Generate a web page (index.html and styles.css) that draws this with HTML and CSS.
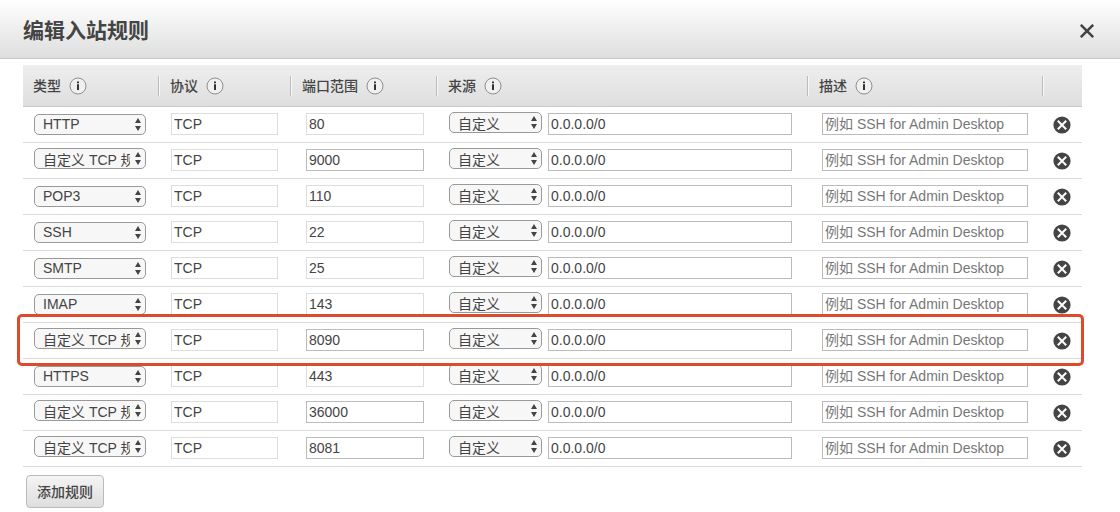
FILE: index.html
```html
<!DOCTYPE html>
<html lang="zh-CN">
<head>
<meta charset="utf-8">
<title>编辑入站规则</title>
<link rel="stylesheet" href="styles.css">
</head>
<body>
<svg class="sprite" aria-hidden="true">
  <symbol id="info" viewBox="0 0 18 18"><circle cx="9" cy="9" r="8" fill="#f0f0f0" stroke="#8f8f8f"/><path d="M8 4.5h2v1.7H8zM8 7.2h2V13H8z" fill="#333"/></symbol>
  <symbol id="remove" viewBox="0 0 18 18"><circle cx="9" cy="9" r="8.6" fill="#444"/><path d="M4.8 4.8l8.4 8.4M13.2 4.8l-8.4 8.4" stroke="#fff" stroke-width="2"/></symbol>
</svg>
<header class="titlebar">
  <h1 class="title">编辑入站规则</h1>
  <button class="icon-button" type="button" aria-label="关闭"><svg class="close-icon" viewBox="0 0 14 14"><path d="M0.8 0.8l12.4 12.4M13.2 0.8L0.8 13.2" stroke="#444" stroke-width="2.5"/></svg></button>
</header>
<main class="content">
  <table class="rules">
    <colgroup><col class="col-type"><col class="col-protocol"><col class="col-port"><col class="col-source"><col class="col-desc"><col class="col-remove"></colgroup>
    <thead>
      <tr>
        <th><div class="head">类型<svg class="icon"><use href="#info"/></svg></div></th>
        <th><div class="head">协议<svg class="icon"><use href="#info"/></svg></div></th>
        <th><div class="head">端口范围<svg class="icon"><use href="#info"/></svg></div></th>
        <th><div class="head">来源<svg class="icon"><use href="#info"/></svg></div></th>
        <th><div class="head">描述<svg class="icon"><use href="#info"/></svg></div></th>
        <th><div class="head"></div></th>
      </tr>
    </thead>
    <tbody>
      <tr>
        <td class="type preset"><div class="picker"><select aria-label="类型"><option>HTTP</option></select></div></td>
        <td class="protocol"><input class="field" aria-label="协议" value="TCP" disabled></td>
        <td class="port"><input class="field" aria-label="端口范围" value="80" disabled></td>
        <td class="source"><div class="source-fields"><div class="picker"><select aria-label="来源"><option>自定义</option></select></div><input class="field" aria-label="来源地址" value="0.0.0.0/0"></div></td>
        <td class="desc"><input class="field" aria-label="描述" placeholder="例如 SSH for Admin Desktop"></td>
        <td class="remove"><button class="icon-button" type="button" aria-label="删除"><svg class="icon"><use href="#remove"/></svg></button></td>
      </tr>
      <tr>
        <td class="type"><div class="picker"><select aria-label="类型"><option>自定义 TCP 规则</option></select></div></td>
        <td class="protocol"><input class="field" aria-label="协议" value="TCP" disabled></td>
        <td class="port"><input class="field" aria-label="端口范围" value="9000"></td>
        <td class="source"><div class="source-fields"><div class="picker"><select aria-label="来源"><option>自定义</option></select></div><input class="field" aria-label="来源地址" value="0.0.0.0/0"></div></td>
        <td class="desc"><input class="field" aria-label="描述" placeholder="例如 SSH for Admin Desktop"></td>
        <td class="remove"><button class="icon-button" type="button" aria-label="删除"><svg class="icon"><use href="#remove"/></svg></button></td>
      </tr>
      <tr>
        <td class="type preset"><div class="picker"><select aria-label="类型"><option>POP3</option></select></div></td>
        <td class="protocol"><input class="field" aria-label="协议" value="TCP" disabled></td>
        <td class="port"><input class="field" aria-label="端口范围" value="110" disabled></td>
        <td class="source"><div class="source-fields"><div class="picker"><select aria-label="来源"><option>自定义</option></select></div><input class="field" aria-label="来源地址" value="0.0.0.0/0"></div></td>
        <td class="desc"><input class="field" aria-label="描述" placeholder="例如 SSH for Admin Desktop"></td>
        <td class="remove"><button class="icon-button" type="button" aria-label="删除"><svg class="icon"><use href="#remove"/></svg></button></td>
      </tr>
      <tr>
        <td class="type preset"><div class="picker"><select aria-label="类型"><option>SSH</option></select></div></td>
        <td class="protocol"><input class="field" aria-label="协议" value="TCP" disabled></td>
        <td class="port"><input class="field" aria-label="端口范围" value="22" disabled></td>
        <td class="source"><div class="source-fields"><div class="picker"><select aria-label="来源"><option>自定义</option></select></div><input class="field" aria-label="来源地址" value="0.0.0.0/0"></div></td>
        <td class="desc"><input class="field" aria-label="描述" placeholder="例如 SSH for Admin Desktop"></td>
        <td class="remove"><button class="icon-button" type="button" aria-label="删除"><svg class="icon"><use href="#remove"/></svg></button></td>
      </tr>
      <tr>
        <td class="type preset"><div class="picker"><select aria-label="类型"><option>SMTP</option></select></div></td>
        <td class="protocol"><input class="field" aria-label="协议" value="TCP" disabled></td>
        <td class="port"><input class="field" aria-label="端口范围" value="25" disabled></td>
        <td class="source"><div class="source-fields"><div class="picker"><select aria-label="来源"><option>自定义</option></select></div><input class="field" aria-label="来源地址" value="0.0.0.0/0"></div></td>
        <td class="desc"><input class="field" aria-label="描述" placeholder="例如 SSH for Admin Desktop"></td>
        <td class="remove"><button class="icon-button" type="button" aria-label="删除"><svg class="icon"><use href="#remove"/></svg></button></td>
      </tr>
      <tr>
        <td class="type preset"><div class="picker"><select aria-label="类型"><option>IMAP</option></select></div></td>
        <td class="protocol"><input class="field" aria-label="协议" value="TCP" disabled></td>
        <td class="port"><input class="field" aria-label="端口范围" value="143" disabled></td>
        <td class="source"><div class="source-fields"><div class="picker"><select aria-label="来源"><option>自定义</option></select></div><input class="field" aria-label="来源地址" value="0.0.0.0/0"></div></td>
        <td class="desc"><input class="field" aria-label="描述" placeholder="例如 SSH for Admin Desktop"></td>
        <td class="remove"><button class="icon-button" type="button" aria-label="删除"><svg class="icon"><use href="#remove"/></svg></button></td>
      </tr>
      <tr class="highlighted">
        <td class="type"><div class="picker"><select aria-label="类型"><option>自定义 TCP 规则</option></select></div></td>
        <td class="protocol"><input class="field" aria-label="协议" value="TCP" disabled></td>
        <td class="port"><input class="field" aria-label="端口范围" value="8090"></td>
        <td class="source"><div class="source-fields"><div class="picker"><select aria-label="来源"><option>自定义</option></select></div><input class="field" aria-label="来源地址" value="0.0.0.0/0"></div></td>
        <td class="desc"><input class="field" aria-label="描述" placeholder="例如 SSH for Admin Desktop"></td>
        <td class="remove"><button class="icon-button" type="button" aria-label="删除"><svg class="icon"><use href="#remove"/></svg></button></td>
      </tr>
      <tr>
        <td class="type preset"><div class="picker"><select aria-label="类型"><option>HTTPS</option></select></div></td>
        <td class="protocol"><input class="field" aria-label="协议" value="TCP" disabled></td>
        <td class="port"><input class="field" aria-label="端口范围" value="443" disabled></td>
        <td class="source"><div class="source-fields"><div class="picker"><select aria-label="来源"><option>自定义</option></select></div><input class="field" aria-label="来源地址" value="0.0.0.0/0"></div></td>
        <td class="desc"><input class="field" aria-label="描述" placeholder="例如 SSH for Admin Desktop"></td>
        <td class="remove"><button class="icon-button" type="button" aria-label="删除"><svg class="icon"><use href="#remove"/></svg></button></td>
      </tr>
      <tr>
        <td class="type"><div class="picker"><select aria-label="类型"><option>自定义 TCP 规则</option></select></div></td>
        <td class="protocol"><input class="field" aria-label="协议" value="TCP" disabled></td>
        <td class="port"><input class="field" aria-label="端口范围" value="36000"></td>
        <td class="source"><div class="source-fields"><div class="picker"><select aria-label="来源"><option>自定义</option></select></div><input class="field" aria-label="来源地址" value="0.0.0.0/0"></div></td>
        <td class="desc"><input class="field" aria-label="描述" placeholder="例如 SSH for Admin Desktop"></td>
        <td class="remove"><button class="icon-button" type="button" aria-label="删除"><svg class="icon"><use href="#remove"/></svg></button></td>
      </tr>
      <tr>
        <td class="type"><div class="picker"><select aria-label="类型"><option>自定义 TCP 规则</option></select></div></td>
        <td class="protocol"><input class="field" aria-label="协议" value="TCP" disabled></td>
        <td class="port"><input class="field" aria-label="端口范围" value="8081"></td>
        <td class="source"><div class="source-fields"><div class="picker"><select aria-label="来源"><option>自定义</option></select></div><input class="field" aria-label="来源地址" value="0.0.0.0/0"></div></td>
        <td class="desc"><input class="field" aria-label="描述" placeholder="例如 SSH for Admin Desktop"></td>
        <td class="remove"><button class="icon-button" type="button" aria-label="删除"><svg class="icon"><use href="#remove"/></svg></button></td>
      </tr>
    </tbody>
  </table>
  <button class="add-rule" type="button">添加规则</button>
</main>
</body>
</html>
```
FILE: styles.css
```css
* {
  box-sizing: border-box;
}

body {
  margin: 0;
  background: #fff;
  color: #444;
  font: 14px/20px "Liberation Sans", "Noto Sans CJK SC", sans-serif;
}

button,
input,
select {
  margin: 0;
  font: inherit;
  color: inherit;
}

.sprite {
  display: none;
}

.titlebar {
  display: flex;
  align-items: center;
  justify-content: space-between;
  padding: 16px 24px 12px 23px;
  border-bottom: 1px solid #c6c6c6;
  background: linear-gradient(#fff, #dedede);
}

.title {
  margin: 0;
  font-size: 21px;
  line-height: 30px;
  font-weight: 700;
}

.icon-button {
  display: flex;
  padding: 0;
  border: 0;
  background: none;
  cursor: pointer;
}

.close-icon {
  width: 18px;
  height: 14px;
}

.content {
  padding: 6px 38px 4px 23px;
}

.rules {
  width: 100%;
  table-layout: fixed;
  border-collapse: separate;
  border-spacing: 0;
}

.col-type { width: 135px; }
.col-protocol { width: 132px; }
.col-port { width: 146px; }
.col-desc { width: 235px; }
.col-remove { width: 40px; }

.rules thead tr {
  background: linear-gradient(#eee, #dedede);
}

.rules th {
  padding: 11px 0 10px;
  border-bottom: 1px solid #c6c6c6;
  text-align: left;
  font-weight: 500;
}

.head {
  display: flex;
  align-items: center;
  gap: 8px;
  height: 20px;
  padding-left: 11px;
  border-left: 1px solid #bbb;
  box-shadow: inset 1px 0 #f8f8f8;
}

.rules th:first-child .head {
  padding-left: 10px;
  border-left: 0;
  box-shadow: none;
}

.icon {
  width: 18px;
  height: 18px;
}

.rules td {
  height: 36px;
  padding: 6px 12px 0 13px;
  border-bottom: 1px solid #d9d9d9;
  vertical-align: top;
}

.rules .type {
  padding: 5px 12px 0 11px;
}

.rules .preset {
  padding-top: 7px;
}

.rules .port {
  padding-left: 16px;
}

.rules .source {
  padding: 5px 15px 0 13px;
}

.rules .desc {
  padding: 6px 14px 0 15px;
}

.rules .remove {
  padding: 9px 0 0 11px;
}

.field {
  display: block;
  width: 100%;
  min-width: 0;
  height: 22px;
  padding: 0 2px;
  border: 1px solid #bbb;
  border-radius: 0;
  background: #fff;
  line-height: 20px;
}

.field:disabled {
  border-color: #ddd;
}

.field::placeholder {
  color: #777;
}

.source-fields {
  display: flex;
  align-items: flex-end;
  gap: 6px;
}

.source-fields .picker {
  flex: 0 0 93px;
  align-self: flex-start;
}

.source-fields .field {
  flex: 1;
  margin-top: 1px;
}

.picker {
  position: relative;
}

.picker select {
  display: block;
  width: 100%;
  height: 21px;
  padding: 2px 15px 0 8px;
  border: 1px solid #999;
  border-radius: 5px;
  background: #f7f7f7;
  line-height: 19px;
  appearance: none;
}

.preset .picker select {
  padding-top: 0;
}

.picker::before,
.picker::after {
  content: "";
  position: absolute;
  right: 5px;
  border: solid transparent;
  border-width: 0 3px;
  pointer-events: none;
}

.picker::before {
  top: 4px;
  border-bottom: 5px solid #444;
}

.picker::after {
  top: 12px;
  border-top: 5px solid #444;
}

.highlighted {
  position: relative;
}

/* The row is the containing block, so the frame spans every cell. */
.highlighted .type::after {
  content: "";
  position: absolute;
  inset: -9px -2px -7px -6px;
  z-index: 1;
  border: 3px solid #de4a2c;
  border-radius: 5px;
  pointer-events: none;
}

.add-rule {
  display: block;
  margin: 8px 0 0 3px;
  padding: 6px 10px 5px;
  border: 1px solid #bbb;
  border-radius: 4px;
  background: linear-gradient(#f4f4f4, #dedede);
  font-weight: 500;
  cursor: pointer;
}
```
